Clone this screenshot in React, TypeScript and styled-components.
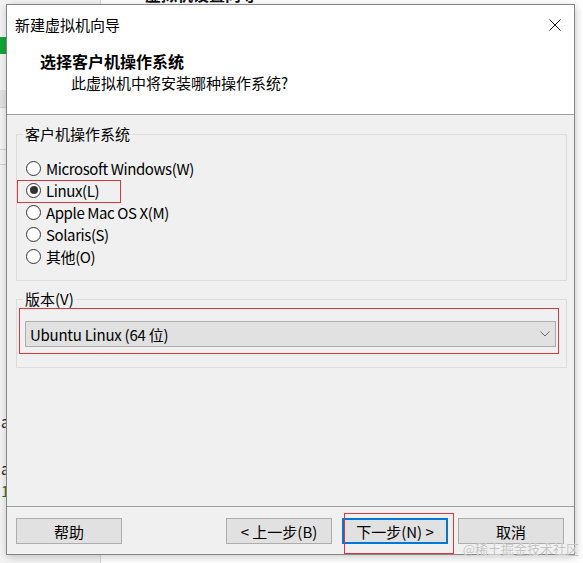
import React from 'react';
import styled, { createGlobalStyle } from 'styled-components';

const FONT = `"Noto Sans CJK SC", "Noto Sans", sans-serif`;

const GlobalStyle = createGlobalStyle`
  html, body { margin: 0; padding: 0; background: #fff; }
  body { font-family: ${FONT}; }
  * { box-sizing: border-box; }
`;

const Desktop = styled.div`
  position: relative;
  width: 583px;
  height: 563px;
  overflow: hidden;
  background: #fff;
  font-family: ${FONT};
  color: #000;
`;

/* ---------- background application (mostly hidden) ---------- */
const BackApp = styled.div`
  display: flex;
  height: 100%;
`;

const Sidebar = styled.div`
  width: 101px;
  background: #f3f3f3;
  border-right: 1px solid #d5d5d5;
  display: flex;
  flex-direction: column;
`;

const SideItem = styled.div<{ $h: number; $bg?: string; $line?: boolean }>`
  height: ${(p) => p.$h}px;
  background: ${(p) => p.$bg || 'transparent'};
  border-bottom: ${(p) => (p.$line ? '1px solid #d0d0d0' : 'none')};
  flex-shrink: 0;
`;

const SideText = styled.div<{ $color?: string; $mt: number }>`
  margin-top: ${(p) => p.$mt}px;
  padding-left: 1px;
  font-size: 15px;
  line-height: 18px;
  color: ${(p) => p.$color || '#222'};
  white-space: nowrap;
`;

const MainArea = styled.div`
  flex: 1;
  background: #fff;
  overflow: hidden;
`;

const MainHeadline = styled.div`
  margin: -14px 0 0 44px;
  font-size: 16px;
  line-height: 16px;
  font-weight: bold;
  color: #111;
  white-space: nowrap;
`;

/* ---------- dialog window ---------- */
const Dialog = styled.div`
  position: absolute;
  left: 6px;
  top: 4px;
  width: 569px;
  height: 551px;
  border: 1px solid #858585;
  background: #f0f0f0;
  box-shadow: 1px 2px 8px rgba(0, 0, 0, 0.22);
  display: flex;
  flex-direction: column;
`;

const TitleBar = styled.div`
  height: 40px;
  flex-shrink: 0;
  background: #fff;
  display: flex;
  align-items: center;
  justify-content: space-between;
  padding: 0 12px 0 8px;
`;

const TitleText = styled.span`
  font-size: 15px;
  line-height: 20px;
`;

const CloseButton = styled.span`
  display: flex;
  width: 14px;
  height: 14px;
`;

const Header = styled.div`
  height: 70px;
  flex-shrink: 0;
  background: #fff;
  border-bottom: 1px solid #a0a0a0;
  padding-top: 5px;
`;

const Heading = styled.div`
  margin-left: 33px;
  font-size: 16px;
  line-height: 22px;
  font-weight: bold;
`;

const Subheading = styled.div`
  margin: 1px 0 0 64px;
  font-size: 15px;
  line-height: 20px;
`;

const Body = styled.div`
  flex: 1;
  padding: 9px 7px 0 9px;
  display: flex;
  flex-direction: column;
`;

const GroupBox = styled.fieldset<{ $mt?: number }>`
  margin: ${(p) => p.$mt || 0}px 0 0 0;
  padding: 0;
  min-width: 0;
  border: 1px solid #dcdcdc;
`;

const GroupLabel = styled.legend`
  margin-left: 6px;
  padding: 0 2px;
  font-size: 15px;
  line-height: 20px;
`;

const RadioList = styled.div`
  display: flex;
  flex-direction: column;
  align-items: flex-start;
  padding: 13px 0 13px 9px;
`;

const RadioRow = styled.label`
  position: relative;
  height: 22px;
  display: flex;
  align-items: center;
  gap: 5px;
  font-size: 15px;
  letter-spacing: -0.4px;
`;

const RadioCircle = styled.span<{ $checked?: boolean }>`
  width: 15px;
  height: 15px;
  border-radius: 50%;
  border: 1px solid #333;
  background: #fff;
  display: flex;
  align-items: center;
  justify-content: center;
  flex-shrink: 0;
  &::after {
    content: '';
    display: ${(p) => (p.$checked ? 'block' : 'none')};
    width: 8px;
    height: 8px;
    border-radius: 50%;
    background: #333;
  }
`;

const Highlight = styled.span<{ $l: number; $t: number; $r: number; $b: number }>`
  position: absolute;
  left: ${(p) => p.$l}px;
  top: ${(p) => p.$t}px;
  right: ${(p) => p.$r}px;
  bottom: ${(p) => p.$b}px;
  border: 1px solid #d8393d;
  pointer-events: none;
`;

const SelectArea = styled.div`
  padding: 12px 10px 20px 8px;
`;

const SelectBox = styled.div`
  position: relative;
  height: 26px;
  background: #e1e1e1;
  border: 1px solid #adadad;
  display: flex;
  align-items: center;
  justify-content: space-between;
  padding: 0 5px 0 4px;
  font-size: 15px;
  letter-spacing: -0.25px;
`;

const Chevron = styled.span`
  display: flex;
  width: 10px;
  height: 6px;
`;

const Footer = styled.div`
  height: 48px;
  flex-shrink: 0;
  border-top: 1px solid #a0a0a0;
  display: flex;
  align-items: flex-start;
  padding: 11px 10px 0 9px;
  gap: 10px;
`;

const Button = styled.button<{ $focused?: boolean; $push?: boolean }>`
  position: relative;
  width: 106px;
  height: 26px;
  margin: 0;
  margin-left: ${(p) => (p.$push ? 'auto' : '0')};
  background: #e1e1e1;
  border: ${(p) => (p.$focused ? '2px solid #0078d7' : '1px solid #adadad')};
  font-family: ${FONT};
  font-size: 15px;
  color: #000;
  padding: 0;
  display: flex;
  align-items: center;
  justify-content: center;
`;

const Watermark = styled.span`
  position: absolute;
  right: 4px;
  bottom: 6px;
  font-size: 13px;
  line-height: 16px;
  color: #c4c4c4;
  text-shadow: 0 0 1px #fff;
  white-space: nowrap;
`;

const options = [
  { label: 'Microsoft Windows(W)', checked: false },
  { label: 'Linux(L)', checked: true },
  { label: 'Apple Mac OS X(M)', checked: false },
  { label: 'Solaris(S)', checked: false },
  { label: '其他(O)', checked: false },
];

export default function App() {
  return (
    <>
      <GlobalStyle />
      <Desktop>
        <BackApp>
          <Sidebar>
            <SideItem $h={37} />
            <SideItem $h={17} $bg="#13a538" />
            <SideItem $h={36} />
            <SideItem $h={18} $bg="#e0e0e0" $line />
            <SideItem $h={42} $line />
            <SideItem $h={15} $line />
            <SideText $mt={248}>all</SideText>
            <SideText $mt={29}>ai</SideText>
            <SideText $mt={4} $color="#2b6b2b">1:</SideText>
          </Sidebar>
          <MainArea>
            <MainHeadline>虚拟机设置向导</MainHeadline>
          </MainArea>
        </BackApp>

        <Dialog>
          <TitleBar>
            <TitleText>新建虚拟机向导</TitleText>
            <CloseButton>
              <svg width="14" height="14" viewBox="0 0 14 14">
                <path d="M1.5 1.5 L12.5 12.5 M12.5 1.5 L1.5 12.5" stroke="#111" strokeWidth="1" fill="none" />
              </svg>
            </CloseButton>
          </TitleBar>
          <Header>
            <Heading>选择客户机操作系统</Heading>
            <Subheading>此虚拟机中将安装哪种操作系统?</Subheading>
          </Header>
          <Body>
            <GroupBox>
              <GroupLabel>客户机操作系统</GroupLabel>
              <RadioList>
                {options.map((o) => (
                  <RadioRow key={o.label}>
                    <RadioCircle $checked={o.checked} />
                    {o.label}
                    {o.checked && <Highlight $l={-9} $t={1} $r={-22} $b={-2} />}
                  </RadioRow>
                ))}
              </RadioList>
            </GroupBox>
            <GroupBox $mt={8}>
              <GroupLabel>版本(V)</GroupLabel>
              <SelectArea>
                <SelectBox>
                  <span>Ubuntu Linux (64 位)</span>
                  <Chevron>
                    <svg width="10" height="6" viewBox="0 0 10 6">
                      <polyline points="0.5,0.5 5,5 9.5,0.5" stroke="#666" strokeWidth="1" fill="none" />
                    </svg>
                  </Chevron>
                  <Highlight $l={-7} $t={-14} $r={-4} $b={-8} />
                </SelectBox>
              </SelectArea>
            </GroupBox>
          </Body>
          <Footer>
            <Button>帮助</Button>
            <Button $push>&lt; 上一步(B)</Button>
            <Button $focused>
              下一步(N) &gt;
              <Highlight $l={0} $t={-7} $r={-8} $b={-12} />
            </Button>
            <Button>取消</Button>
          </Footer>
        </Dialog>
        <Watermark>@稀土掘金技术社区</Watermark>
      </Desktop>
    </>
  );
}
